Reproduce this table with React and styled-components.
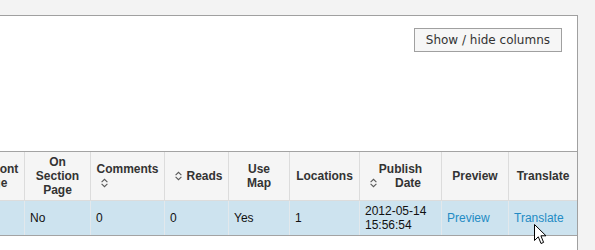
import styled, { createGlobalStyle } from 'styled-components';

const GlobalStyle = createGlobalStyle`
  html, body {
    margin: 0;
    padding: 0;
    background: #f3f3f3;
  }
`

const columns = [260, 63, 66, 74, 64, 61, 70, 82, 67, 69];

const SortIcon = ({ ml = 0, mr = 0 }) => (
  <Chevrons width="7" height="10" viewBox="0 0 7 10" $ml={ml} $mr={mr}>
    <path d="M0.6 4.2 L3.5 1.3 L6.4 4.2 M0.6 5.8 L3.5 8.7 L6.4 5.8" fill="none" stroke="#5a5a5a" strokeWidth="1.1" />
  </Chevrons>
)

const Cursor = () => (
  <Pointer width="13" height="21" viewBox="0 0 13 21">
    <path d="M0.5 0.5 L0.5 16.5 L4.3 12.8 L7 19.5 L9.6 18.4 L6.9 11.8 L12 11.8 Z" fill="#fff" stroke="#000" strokeWidth="1" strokeLinejoin="round" />
  </Pointer>
)

const App = () => {
  return (
    <Page>
      <GlobalStyle />
      <Panel>
        <Toolbar>
          <ColumnsButton>Show / hide columns</ColumnsButton>
        </Toolbar>
        <Table>
          <colgroup>
            {columns.map((w, i) => <col key={i} style={{ width: w }} />)}
          </colgroup>
          <thead>
            <tr>
              <Th $align="left">Title</Th>
              <Th>On Front<br />Page</Th>
              <Th>On<br />Section<br />Page</Th>
              <Th>Comments<br /><SortIcon mr={46} /></Th>
              <Th><SortIcon ml={5} mr={4} />Reads</Th>
              <Th>Use<br />Map</Th>
              <Th>Locations</Th>
              <Th>Publish<br /><SortIcon mr={18} /><Tail>Date</Tail></Th>
              <Th>Preview</Th>
              <Th>Translate</Th>
            </tr>
          </thead>
          <tbody>
            <Row>
              <Td>Sample article</Td>
              <Td>Yes</Td>
              <Td>No</Td>
              <Td>0</Td>
              <Td>0</Td>
              <Td>Yes</Td>
              <Td>1</Td>
              <Td>2012-05-14<br />15:56:54</Td>
              <Td><Link href="#">Preview</Link></Td>
              <Td><Link href="#">Translate</Link></Td>
            </Row>
          </tbody>
        </Table>
      </Panel>
      <Cursor />
    </Page>
  )
}

export default App;

const Page = styled.div`
  position: relative;
  width: 595px;
  height: 250px;
  overflow: hidden;
  padding-top: 15px;
  box-sizing: border-box;
  background: #f3f3f3;
`

const Panel = styled.div`
  margin-left: -300px;
  width: 878px;
  height: 260px;
  box-sizing: border-box;
  background: #fff;
  border: 1px solid #a0a0a0;
`

const Toolbar = styled.div`
  display: flex;
  justify-content: flex-end;
  align-items: flex-start;
  height: 135px;
  padding: 12px 15px 0 0;
  box-sizing: border-box;
`

const ColumnsButton = styled.button`
  height: 24px;
  padding: 0 11px;
  border: 1px solid #a0a0a0;
  border-radius: 0;
  background: #f6f6f6;
  color: #333;
  font-family: "DejaVu Sans", Verdana, sans-serif;
  font-size: 12px;
  line-height: 22px;
`

const Table = styled.table`
  width: 876px;
  table-layout: fixed;
  border-collapse: separate;
  border-spacing: 0;
  border-top: 1px solid #a3a3a3;
  border-bottom: 1px solid #a3a3a3;
  font-family: "Liberation Sans", Arial, sans-serif;
  font-size: 12px;
  line-height: 14px;
`

const Th = styled.th`
  padding: 3px 5px;
  height: 42px;
  background: #f5f5f5;
  color: #333;
  font-weight: bold;
  text-align: ${({ $align }) => $align || 'center'};
  vertical-align: middle;
  border-bottom: 1px solid #dcdcdc;
  border-left: 1px solid #dcdcdc;
  white-space: nowrap;
  &:first-child {
    border-left: none;
  }
`

const Row = styled.tr`
  background: #cde3ef;
`

const Td = styled.td`
  padding: 3px 5px;
  height: 28px;
  color: #111;
  text-align: left;
  vertical-align: middle;
  border-left: 1px solid #e2e8ec;
  white-space: nowrap;
  &:first-child {
    border-left: none;
  }
`

const Link = styled.a`
  color: #238bc4;
  text-decoration: none;
`

const Chevrons = styled.svg`
  display: inline-block;
  vertical-align: -1px;
  margin-left: ${({ $ml }) => $ml}px;
  margin-right: ${({ $mr }) => $mr}px;
`

const Tail = styled.span`
  padding-right: 10px;
`

const Pointer = styled.svg`
  position: absolute;
  left: 534px;
  top: 224px;
`
